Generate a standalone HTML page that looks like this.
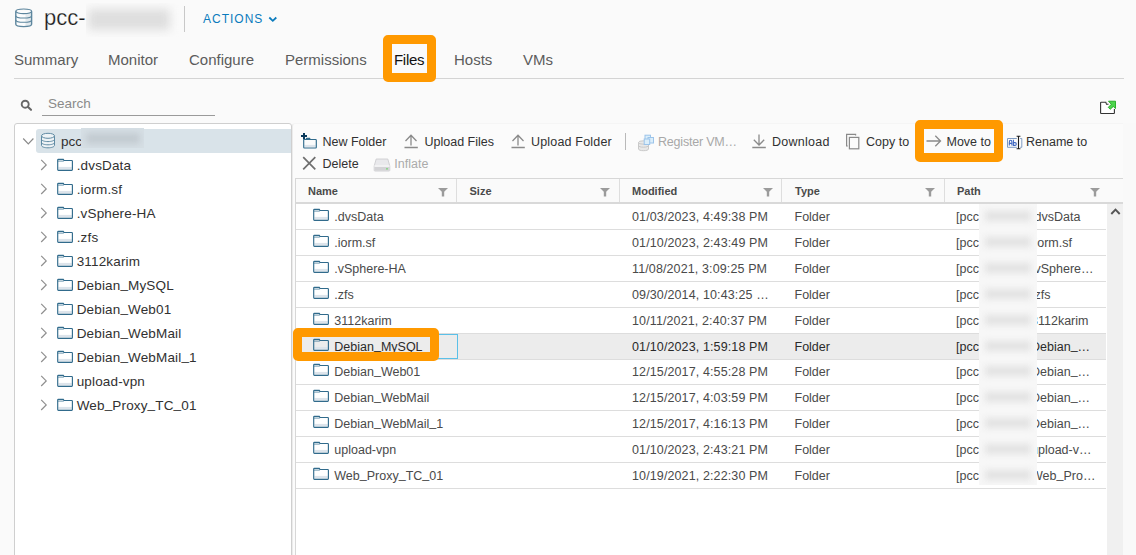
<!DOCTYPE html>
<html><head><meta charset="utf-8">
<style>
*{margin:0;padding:0;box-sizing:border-box}
html,body{width:1136px;height:555px;overflow:hidden;background:#fafafa;font-family:"Liberation Sans",sans-serif;color:#313131}
.a{position:absolute}
.t{position:absolute;white-space:nowrap;line-height:1}
.blur{position:absolute;background:#d9d9d9;filter:blur(4px)}
svg{position:absolute;overflow:visible}
</style></head><body>
<svg style="left:14px;top:8px" width="20" height="21" viewBox="0 0 20 21">
  <path d="M1.8 3.3 V16.3 Q1.8 18.6 9.7 18.6 Q17.6 18.6 17.6 16.3 V3.3 Z" fill="#fbfcfd"/>
  <path d="M11.5 5.6 H17 V17.5 Q15 18.2 11.5 18.3 Z" fill="#e3eaee"/>
  <g fill="none" stroke="#5d869e" stroke-width="1.1">
    <ellipse cx="9.7" cy="3.3" rx="7.9" ry="2.3"/>
    <path d="M1.8 3.3 V16.3 Q1.8 18.6 9.7 18.6 Q17.6 18.6 17.6 16.3 V3.3" stroke-width="1.4"/>
    <path d="M1.8 7.7 Q1.8 10 9.7 10 Q17.6 10 17.6 7.7"/>
    <path d="M1.8 12 Q1.8 14.3 9.7 14.3 Q17.6 14.3 17.6 12"/>
  </g>
</svg>
<div class="t" style="left:44px;top:7.38px;font-size:22px;color:#1a1a1a;-webkit-text-stroke:0.25px #fafafa">pcc-</div>
<div class="a" style="left:86px;top:3px;width:100px;height:34px;overflow:hidden"><div class="blur" style="left:2px;top:6px;width:82px;height:21px;background:#dedede;filter:blur(5px)"></div></div>
<div class="a" style="left:184px;top:6px;width:1px;height:26px;background:#c8c8c8"></div>
<div class="t" style="left:203px;top:12.84px;font-size:12px;letter-spacing:1.0px;color:#0a7bbd">ACTIONS</div>
<svg style="left:268px;top:16px" width="10" height="7" viewBox="0 0 10 7"><path d="M1.3 1.5 L4.8 4.8 L8.3 1.5" fill="none" stroke="#0a7bbd" stroke-width="1.8"/></svg>
<div class="t" style="left:14px;top:52.20px;font-size:15px;color:#5c5c5c">Summary</div>
<div class="t" style="left:108px;top:52.20px;font-size:15px;color:#5c5c5c">Monitor</div>
<div class="t" style="left:189px;top:52.20px;font-size:15px;color:#5c5c5c">Configure</div>
<div class="t" style="left:285px;top:52.20px;font-size:15px;color:#5c5c5c">Permissions</div>
<div class="t" style="left:394px;top:52.20px;font-size:15px;color:#111;letter-spacing:-0.3px">Files</div>
<div class="t" style="left:454px;top:52.20px;font-size:15px;color:#5c5c5c">Hosts</div>
<div class="t" style="left:523px;top:52.20px;font-size:15px;color:#5c5c5c">VMs</div>
<div class="a" style="left:14px;top:78px;width:1110px;height:1px;background:#d4d4d4"></div>
<div class="a" style="left:383px;top:35px;width:53px;height:47px;border:9px solid #ff9900;border-radius:5px"></div>
<svg style="left:20px;top:99px" width="13" height="12" viewBox="0 0 13 12"><circle cx="5.2" cy="5.2" r="3.5" fill="none" stroke="#666" stroke-width="1.9"/><path d="M7.8 7.8 L11 10.8" stroke="#666" stroke-width="2.1" stroke-linecap="round"/></svg>
<div class="t" style="left:48px;top:97.07px;font-size:13.5px;color:#8a8a8a">Search</div>
<div class="a" style="left:42px;top:115px;width:173px;height:1px;background:#9a9a9a"></div>
<svg style="left:1099px;top:100px" width="18" height="15" viewBox="0 0 18 15">
  <path d="M9.5 4.3 H7.5 L6.8 2.2 H2.2 Q1.6 2.2 1.6 2.8 V12.9 Q1.6 13.5 2.2 13.5 H14.8 Q15.4 13.5 15.4 12.9 V9" fill="#fff" stroke="#333" stroke-width="1.1"/>
  <path d="M9.5 1.2 H16.5 V8.5 L14.3 6.5 L11.2 9.3 L9.3 7.3 L12.3 4.3 Z" fill="#4cd64c" stroke="#12a012" stroke-width="0.8"/>
</svg>
<div class="a" style="left:14px;top:123px;width:278px;height:450px;background:#fff;border:1px solid #cfcfcf;border-radius:3px"></div>
<div class="a" style="left:36px;top:129px;width:255px;height:24px;background:#d9e3e9;border-radius:3px 0 0 3px"></div>
<svg style="left:22px;top:137px" width="13" height="9" viewBox="0 0 13 9"><path d="M1.2 1.5 L6.3 6.8 L11.4 1.5" fill="none" stroke="#8a8a8a" stroke-width="1.2"/></svg>
<svg style="left:40px;top:132px" width="16" height="17" viewBox="0 0 16 17">
  <g fill="#eef3f6" stroke="#5f8aa3" stroke-width="1">
    <path d="M1.5 3.8 v9.6 c0 1.4 2.9 2.4 6.5 2.4 s6.5 -1 6.5 -2.4 v-9.6"/>
    <ellipse cx="8" cy="3.8" rx="6.5" ry="2.5"/>
    <path d="M1.5 7.2 c0 1.4 2.9 2.4 6.5 2.4 s6.5 -1 6.5 -2.4" fill="none"/>
    <path d="M1.5 10.4 c0 1.4 2.9 2.4 6.5 2.4 s6.5 -1 6.5 -2.4" fill="none"/>
  </g>
</svg>
<div class="t" style="left:61px;top:135.17px;font-size:13.5px;color:#313131">pcc</div>
<div class="a" style="left:81px;top:128px;width:63px;height:20px;overflow:hidden;background:#d6dfe5"><div class="blur" style="left:5px;top:5px;width:54px;height:11px;background:#c3cbd1;filter:blur(3px)"></div></div>
<svg style="left:40px;top:159px" width="8" height="12" viewBox="0 0 8 12"><path d="M1.2 0.8 L6.2 5.9 L1.2 11" fill="none" stroke="#8f8f8f" stroke-width="1.2"/></svg>
<svg style="left:56px;top:158px" width="18" height="14" viewBox="0 0 18 14">
<rect x="2.4" y="8.9" width="13.4" height="2.8" fill="#dde4eb"/>
<path d="M1.7 2.1 V11.6 Q1.7 12.3 2.4 12.3 H15.7 Q16.4 12.3 16.4 11.6 V3.2 Q16.4 2.5 15.7 2.5 H8 L7.3 1.4 H2.4 Q1.7 1.4 1.7 2.1 Z" fill="none" stroke="#316b8c" stroke-width="1.15"/>
<path d="M1.7 3.1 H7.8" stroke="#316b8c" stroke-width="0.9" opacity="0.8"/>
</svg>
<div class="t" style="left:76.7px;top:159.07px;font-size:13.5px;letter-spacing:0.15px;color:#313131">.dvsData</div>
<svg style="left:40px;top:183px" width="8" height="12" viewBox="0 0 8 12"><path d="M1.2 0.8 L6.2 5.9 L1.2 11" fill="none" stroke="#8f8f8f" stroke-width="1.2"/></svg>
<svg style="left:56px;top:182px" width="18" height="14" viewBox="0 0 18 14">
<rect x="2.4" y="8.9" width="13.4" height="2.8" fill="#dde4eb"/>
<path d="M1.7 2.1 V11.6 Q1.7 12.3 2.4 12.3 H15.7 Q16.4 12.3 16.4 11.6 V3.2 Q16.4 2.5 15.7 2.5 H8 L7.3 1.4 H2.4 Q1.7 1.4 1.7 2.1 Z" fill="none" stroke="#316b8c" stroke-width="1.15"/>
<path d="M1.7 3.1 H7.8" stroke="#316b8c" stroke-width="0.9" opacity="0.8"/>
</svg>
<div class="t" style="left:76.7px;top:183.07px;font-size:13.5px;letter-spacing:0.15px;color:#313131">.iorm.sf</div>
<svg style="left:40px;top:207px" width="8" height="12" viewBox="0 0 8 12"><path d="M1.2 0.8 L6.2 5.9 L1.2 11" fill="none" stroke="#8f8f8f" stroke-width="1.2"/></svg>
<svg style="left:56px;top:206px" width="18" height="14" viewBox="0 0 18 14">
<rect x="2.4" y="8.9" width="13.4" height="2.8" fill="#dde4eb"/>
<path d="M1.7 2.1 V11.6 Q1.7 12.3 2.4 12.3 H15.7 Q16.4 12.3 16.4 11.6 V3.2 Q16.4 2.5 15.7 2.5 H8 L7.3 1.4 H2.4 Q1.7 1.4 1.7 2.1 Z" fill="none" stroke="#316b8c" stroke-width="1.15"/>
<path d="M1.7 3.1 H7.8" stroke="#316b8c" stroke-width="0.9" opacity="0.8"/>
</svg>
<div class="t" style="left:76.7px;top:207.07px;font-size:13.5px;letter-spacing:0.15px;color:#313131">.vSphere-HA</div>
<svg style="left:40px;top:231px" width="8" height="12" viewBox="0 0 8 12"><path d="M1.2 0.8 L6.2 5.9 L1.2 11" fill="none" stroke="#8f8f8f" stroke-width="1.2"/></svg>
<svg style="left:56px;top:230px" width="18" height="14" viewBox="0 0 18 14">
<rect x="2.4" y="8.9" width="13.4" height="2.8" fill="#dde4eb"/>
<path d="M1.7 2.1 V11.6 Q1.7 12.3 2.4 12.3 H15.7 Q16.4 12.3 16.4 11.6 V3.2 Q16.4 2.5 15.7 2.5 H8 L7.3 1.4 H2.4 Q1.7 1.4 1.7 2.1 Z" fill="none" stroke="#316b8c" stroke-width="1.15"/>
<path d="M1.7 3.1 H7.8" stroke="#316b8c" stroke-width="0.9" opacity="0.8"/>
</svg>
<div class="t" style="left:76.7px;top:231.07px;font-size:13.5px;letter-spacing:0.15px;color:#313131">.zfs</div>
<svg style="left:40px;top:255px" width="8" height="12" viewBox="0 0 8 12"><path d="M1.2 0.8 L6.2 5.9 L1.2 11" fill="none" stroke="#8f8f8f" stroke-width="1.2"/></svg>
<svg style="left:56px;top:254px" width="18" height="14" viewBox="0 0 18 14">
<rect x="2.4" y="8.9" width="13.4" height="2.8" fill="#dde4eb"/>
<path d="M1.7 2.1 V11.6 Q1.7 12.3 2.4 12.3 H15.7 Q16.4 12.3 16.4 11.6 V3.2 Q16.4 2.5 15.7 2.5 H8 L7.3 1.4 H2.4 Q1.7 1.4 1.7 2.1 Z" fill="none" stroke="#316b8c" stroke-width="1.15"/>
<path d="M1.7 3.1 H7.8" stroke="#316b8c" stroke-width="0.9" opacity="0.8"/>
</svg>
<div class="t" style="left:76.7px;top:255.07px;font-size:13.5px;letter-spacing:0.15px;color:#313131">3112karim</div>
<svg style="left:40px;top:279px" width="8" height="12" viewBox="0 0 8 12"><path d="M1.2 0.8 L6.2 5.9 L1.2 11" fill="none" stroke="#8f8f8f" stroke-width="1.2"/></svg>
<svg style="left:56px;top:278px" width="18" height="14" viewBox="0 0 18 14">
<rect x="2.4" y="8.9" width="13.4" height="2.8" fill="#dde4eb"/>
<path d="M1.7 2.1 V11.6 Q1.7 12.3 2.4 12.3 H15.7 Q16.4 12.3 16.4 11.6 V3.2 Q16.4 2.5 15.7 2.5 H8 L7.3 1.4 H2.4 Q1.7 1.4 1.7 2.1 Z" fill="none" stroke="#316b8c" stroke-width="1.15"/>
<path d="M1.7 3.1 H7.8" stroke="#316b8c" stroke-width="0.9" opacity="0.8"/>
</svg>
<div class="t" style="left:76.7px;top:279.07px;font-size:13.5px;letter-spacing:0.15px;color:#313131">Debian<span style="position:relative;top:-2px">_</span>MySQL</div>
<svg style="left:40px;top:303px" width="8" height="12" viewBox="0 0 8 12"><path d="M1.2 0.8 L6.2 5.9 L1.2 11" fill="none" stroke="#8f8f8f" stroke-width="1.2"/></svg>
<svg style="left:56px;top:302px" width="18" height="14" viewBox="0 0 18 14">
<rect x="2.4" y="8.9" width="13.4" height="2.8" fill="#dde4eb"/>
<path d="M1.7 2.1 V11.6 Q1.7 12.3 2.4 12.3 H15.7 Q16.4 12.3 16.4 11.6 V3.2 Q16.4 2.5 15.7 2.5 H8 L7.3 1.4 H2.4 Q1.7 1.4 1.7 2.1 Z" fill="none" stroke="#316b8c" stroke-width="1.15"/>
<path d="M1.7 3.1 H7.8" stroke="#316b8c" stroke-width="0.9" opacity="0.8"/>
</svg>
<div class="t" style="left:76.7px;top:303.07px;font-size:13.5px;letter-spacing:0.15px;color:#313131">Debian<span style="position:relative;top:-2px">_</span>Web01</div>
<svg style="left:40px;top:327px" width="8" height="12" viewBox="0 0 8 12"><path d="M1.2 0.8 L6.2 5.9 L1.2 11" fill="none" stroke="#8f8f8f" stroke-width="1.2"/></svg>
<svg style="left:56px;top:326px" width="18" height="14" viewBox="0 0 18 14">
<rect x="2.4" y="8.9" width="13.4" height="2.8" fill="#dde4eb"/>
<path d="M1.7 2.1 V11.6 Q1.7 12.3 2.4 12.3 H15.7 Q16.4 12.3 16.4 11.6 V3.2 Q16.4 2.5 15.7 2.5 H8 L7.3 1.4 H2.4 Q1.7 1.4 1.7 2.1 Z" fill="none" stroke="#316b8c" stroke-width="1.15"/>
<path d="M1.7 3.1 H7.8" stroke="#316b8c" stroke-width="0.9" opacity="0.8"/>
</svg>
<div class="t" style="left:76.7px;top:327.07px;font-size:13.5px;letter-spacing:0.15px;color:#313131">Debian<span style="position:relative;top:-2px">_</span>WebMail</div>
<svg style="left:40px;top:351px" width="8" height="12" viewBox="0 0 8 12"><path d="M1.2 0.8 L6.2 5.9 L1.2 11" fill="none" stroke="#8f8f8f" stroke-width="1.2"/></svg>
<svg style="left:56px;top:350px" width="18" height="14" viewBox="0 0 18 14">
<rect x="2.4" y="8.9" width="13.4" height="2.8" fill="#dde4eb"/>
<path d="M1.7 2.1 V11.6 Q1.7 12.3 2.4 12.3 H15.7 Q16.4 12.3 16.4 11.6 V3.2 Q16.4 2.5 15.7 2.5 H8 L7.3 1.4 H2.4 Q1.7 1.4 1.7 2.1 Z" fill="none" stroke="#316b8c" stroke-width="1.15"/>
<path d="M1.7 3.1 H7.8" stroke="#316b8c" stroke-width="0.9" opacity="0.8"/>
</svg>
<div class="t" style="left:76.7px;top:351.07px;font-size:13.5px;letter-spacing:0.15px;color:#313131">Debian<span style="position:relative;top:-2px">_</span>WebMail<span style="position:relative;top:-2px">_</span>1</div>
<svg style="left:40px;top:375px" width="8" height="12" viewBox="0 0 8 12"><path d="M1.2 0.8 L6.2 5.9 L1.2 11" fill="none" stroke="#8f8f8f" stroke-width="1.2"/></svg>
<svg style="left:56px;top:374px" width="18" height="14" viewBox="0 0 18 14">
<rect x="2.4" y="8.9" width="13.4" height="2.8" fill="#dde4eb"/>
<path d="M1.7 2.1 V11.6 Q1.7 12.3 2.4 12.3 H15.7 Q16.4 12.3 16.4 11.6 V3.2 Q16.4 2.5 15.7 2.5 H8 L7.3 1.4 H2.4 Q1.7 1.4 1.7 2.1 Z" fill="none" stroke="#316b8c" stroke-width="1.15"/>
<path d="M1.7 3.1 H7.8" stroke="#316b8c" stroke-width="0.9" opacity="0.8"/>
</svg>
<div class="t" style="left:76.7px;top:375.07px;font-size:13.5px;letter-spacing:0.15px;color:#313131">upload-vpn</div>
<svg style="left:40px;top:399px" width="8" height="12" viewBox="0 0 8 12"><path d="M1.2 0.8 L6.2 5.9 L1.2 11" fill="none" stroke="#8f8f8f" stroke-width="1.2"/></svg>
<svg style="left:56px;top:398px" width="18" height="14" viewBox="0 0 18 14">
<rect x="2.4" y="8.9" width="13.4" height="2.8" fill="#dde4eb"/>
<path d="M1.7 2.1 V11.6 Q1.7 12.3 2.4 12.3 H15.7 Q16.4 12.3 16.4 11.6 V3.2 Q16.4 2.5 15.7 2.5 H8 L7.3 1.4 H2.4 Q1.7 1.4 1.7 2.1 Z" fill="none" stroke="#316b8c" stroke-width="1.15"/>
<path d="M1.7 3.1 H7.8" stroke="#316b8c" stroke-width="0.9" opacity="0.8"/>
</svg>
<div class="t" style="left:76.7px;top:399.07px;font-size:13.5px;letter-spacing:0.15px;color:#313131">Web<span style="position:relative;top:-2px">_</span>Proxy<span style="position:relative;top:-2px">_</span>TC<span style="position:relative;top:-2px">_</span>01</div>
<div class="a" style="left:292px;top:123px;width:832px;height:450px;background:#fbfbfb;border-left:1px solid #ebebeb;border-top:1px solid #f5f5f5;border-radius:3px 0 0 0"></div>
<svg style="left:300px;top:132px" width="19" height="18" viewBox="0 0 19 18">
<rect x="4.4" y="12.9" width="11.2" height="2.1" fill="#dde4eb"/>
<path d="M3.7 7.5 V15.3 Q3.7 16 4.4 16 H15.6 Q16.3 16 16.3 15.3 V8.2 Q16.3 7.5 15.6 7.5 Z M6.3 7.5 V6.9 Q6.3 6.3 6.9 6.3 H9.6 L10.2 7.5" fill="none" stroke="#316b8c" stroke-width="1.15"/>
<path d="M1 4 H7 M4 1 V7" stroke="#0b3a5c" stroke-width="2"/>
</svg>
<div class="t" style="left:322.5px;top:136.22px;font-size:12.5px;">New Folder</div>
<svg style="left:404px;top:134px" width="15" height="15" viewBox="0 0 15 15"><path d="M1.5 7 L7 1.3 L12.5 7 M7 1.3 V11.5 M0.5 13.5 H13.8" fill="none" stroke="#8a8a8a" stroke-width="1.3"/></svg>
<div class="t" style="left:424.5px;top:136.22px;font-size:12.5px;">Upload Files</div>
<svg style="left:510.5px;top:134px" width="15" height="15" viewBox="0 0 15 15"><path d="M1.5 7 L7 1.3 L12.5 7 M7 1.3 V11.5 M0.5 13.5 H13.8" fill="none" stroke="#8a8a8a" stroke-width="1.3"/></svg>
<div class="t" style="left:531px;top:136.22px;font-size:12.5px;letter-spacing:0.18px">Upload Folder</div>
<div class="a" style="left:625px;top:133px;width:1px;height:17px;background:#b9b9b9"></div>
<svg style="left:637px;top:134px" width="18" height="18" viewBox="0 0 18 18">
<g fill="#e8e8e8" stroke="#c4c4c4" stroke-width="0.9"><path d="M1.5 8.5 v6.5 c0 1 2.2 1.7 5 1.7 s5 -0.7 5 -1.7 v-6.5"/><ellipse cx="6.5" cy="8.5" rx="5" ry="1.7"/><path d="M1.5 11.5 c0 1 2.2 1.7 5 1.7 s5 -0.7 5 -1.7" fill="none"/></g>
<g fill="#dbeefa" stroke="#9cc4ea" stroke-width="1"><rect x="8" y="1.2" width="5.5" height="5.5"/><rect x="11" y="3.5" width="5.5" height="5.5"/><rect x="7.2" y="5" width="5.5" height="5.5"/></g>
</svg>
<div class="t" style="left:658px;top:136.22px;font-size:12.5px;color:#a8a8a8;letter-spacing:-0.2px">Register VM…</div>
<svg style="left:752px;top:134px" width="15" height="15" viewBox="0 0 15 15"><path d="M1.8 5.8 L7 11 L12.2 5.8 M7 0.6 V11 M0.3 13.5 H13.8" fill="none" stroke="#8a8a8a" stroke-width="1.3"/></svg>
<div class="t" style="left:772px;top:136.22px;font-size:12.5px;letter-spacing:0.25px">Download</div>
<svg style="left:845px;top:133px" width="15" height="17" viewBox="0 0 15 17"><path d="M10.6 2.6 V1.4 H1.6 V13 H2.8" fill="none" stroke="#8a8a8a" stroke-width="1.2"/><rect x="4.4" y="4.4" width="9.4" height="11.4" fill="none" stroke="#8a8a8a" stroke-width="1.2"/></svg>
<div class="t" style="left:866px;top:136.22px;font-size:12.5px;">Copy to</div>
<svg style="left:926px;top:135px" width="16" height="12" viewBox="0 0 16 12"><path d="M0.5 6 H14.5 M9.3 0.8 L14.5 6 L9.3 11.2" fill="none" stroke="#8a8a8a" stroke-width="1.3"/></svg>
<div class="t" style="left:946.5px;top:136.22px;font-size:12.5px;">Move to</div>
<svg style="left:1006px;top:135px" width="17" height="15" viewBox="0 0 17 15">
<path d="M10.8 3.5 H1.5 V12.3 H10.8 M14.2 3.5 H15.8 V12.3 H14.2" fill="none" stroke="#7f9cc4" stroke-width="1"/>
<path d="M3.3 10.6 V7.2 Q3.3 5.3 4.6 5.3 Q5.9 5.3 5.9 7.2 V10.6 M3.3 8.4 H5.9 M7.4 4.8 V10.4 H9 Q10.3 10.4 10.3 9 Q10.3 7.6 9 7.6 H7.4" fill="none" stroke="#3f68c2" stroke-width="1.1"/>
<path d="M10.6 1.3 H14.4 M12.5 1.3 V13.7 M10.6 13.7 H14.4" fill="none" stroke="#1e1e1e" stroke-width="1.1"/>
</svg>
<div class="t" style="left:1026px;top:136.22px;font-size:12.5px;">Rename to</div>
<svg style="left:302px;top:156px" width="15" height="15" viewBox="0 0 15 15"><path d="M1.2 1.2 L13.3 13.3 M13.3 1.2 L1.2 13.3" fill="none" stroke="#6f6f6f" stroke-width="1.7"/></svg>
<div class="t" style="left:322.5px;top:158.42px;font-size:12.5px;">Delete</div>
<svg style="left:373px;top:158px" width="18" height="14" viewBox="0 0 18 14">
<path d="M3.2 1 H14.8 L16.8 8 V12.3 Q16.8 13 16 13 H2 Q1.2 13 1.2 12.3 V8 Z" fill="#e9e9ec" stroke="#cdcdd0" stroke-width="0.9"/>
<path d="M1.2 8 H16.8" stroke="#fafafa" stroke-width="1"/>
<rect x="2" y="9" width="14" height="3.5" fill="#d3d3d6"/>
<rect x="13" y="10" width="2" height="1.6" fill="#8fd68f"/>
</svg>
<div class="t" style="left:394.3px;top:158.42px;font-size:12.5px;color:#ababab">Inflate</div>
<div class="a" style="left:915px;top:120px;width:88px;height:42px;border:9px solid #ff9900;border-radius:5px"></div>
<div class="a" style="left:295px;top:178px;width:828px;height:380px;background:#fff;border-left:1px solid #d7d7d7;border-top:1px solid #d7d7d7"></div>
<div class="a" style="left:296px;top:179px;width:827px;height:23px;background:#fafafa"></div>
<div class="a" style="left:296px;top:202px;width:827px;height:2px;background:#d9d9d9"></div>
<div class="a" style="left:456px;top:179px;width:1px;height:23px;background:#dedede"></div>
<div class="a" style="left:619px;top:179px;width:1px;height:23px;background:#dedede"></div>
<div class="a" style="left:781px;top:179px;width:1px;height:23px;background:#dedede"></div>
<div class="a" style="left:944px;top:179px;width:1px;height:23px;background:#dedede"></div>
<svg style="left:438px;top:188px" width="10" height="9" viewBox="0 0 10 9"><path d="M0 0 H10 L6.2 3.8 V8.6 H3.8 V3.8 Z" fill="#9b9b9b"/></svg>
<svg style="left:600.4px;top:188px" width="10" height="9" viewBox="0 0 10 9"><path d="M0 0 H10 L6.2 3.8 V8.6 H3.8 V3.8 Z" fill="#9b9b9b"/></svg>
<svg style="left:763px;top:188px" width="10" height="9" viewBox="0 0 10 9"><path d="M0 0 H10 L6.2 3.8 V8.6 H3.8 V3.8 Z" fill="#9b9b9b"/></svg>
<svg style="left:925px;top:188px" width="10" height="9" viewBox="0 0 10 9"><path d="M0 0 H10 L6.2 3.8 V8.6 H3.8 V3.8 Z" fill="#9b9b9b"/></svg>
<svg style="left:1089.5px;top:188px" width="10" height="9" viewBox="0 0 10 9"><path d="M0 0 H10 L6.2 3.8 V8.6 H3.8 V3.8 Z" fill="#9b9b9b"/></svg>
<div class="t" style="left:308px;top:186.49px;font-size:11px;font-weight:bold;color:#4a4a4a">Name</div>
<div class="t" style="left:469.5px;top:186.49px;font-size:11px;font-weight:bold;color:#4a4a4a">Size</div>
<div class="t" style="left:632px;top:186.49px;font-size:11px;font-weight:bold;color:#4a4a4a">Modified</div>
<div class="t" style="left:795px;top:186.49px;font-size:11px;font-weight:bold;color:#4a4a4a">Type</div>
<div class="t" style="left:957px;top:186.49px;font-size:11px;font-weight:bold;color:#4a4a4a">Path</div>
<div class="a" style="left:1107px;top:204px;width:16px;height:360px;background:#f0f0f0"></div>
<svg style="left:1110px;top:207px" width="11" height="9" viewBox="0 0 11 9"><path d="M1.3 7 L5.5 2.6 L9.7 7" fill="none" stroke="#555" stroke-width="1.9"/></svg>
<div class="a" style="left:1123px;top:123px;width:13px;height:440px;background:#f9f9f9"></div>
<div class="a" style="left:296px;top:229px;width:810px;height:1px;background:#dddddd"></div>
<svg style="left:312px;top:208px" width="18" height="14" viewBox="0 0 18 14">
<rect x="2.4" y="8.9" width="13.4" height="2.8" fill="#dde4eb"/>
<path d="M1.7 2.1 V11.6 Q1.7 12.3 2.4 12.3 H15.7 Q16.4 12.3 16.4 11.6 V3.2 Q16.4 2.5 15.7 2.5 H8 L7.3 1.4 H2.4 Q1.7 1.4 1.7 2.1 Z" fill="none" stroke="#316b8c" stroke-width="1.15"/>
<path d="M1.7 3.1 H7.8" stroke="#316b8c" stroke-width="0.9" opacity="0.8"/>
</svg>
<div class="t" style="left:334.3px;top:211.12px;font-size:12.5px;color:#4a4a4a">.dvsData</div>
<div class="t" style="left:632px;top:211.12px;font-size:12.5px;letter-spacing:0.12px;color:#4a4a4a">01/03/2023, 4:49:38 PM</div>
<div class="t" style="left:794.5px;top:211.12px;font-size:12.5px;color:#4a4a4a">Folder</div>
<div class="t" style="left:956px;top:211.12px;font-size:12.5px;color:#4a4a4a">[pcc</div>
<div class="t" style="left:1031px;top:211.12px;font-size:12.5px;color:#4a4a4a">.dvsData</div>
<div class="a" style="left:296px;top:255px;width:810px;height:1px;background:#dddddd"></div>
<svg style="left:312px;top:234px" width="18" height="14" viewBox="0 0 18 14">
<rect x="2.4" y="8.9" width="13.4" height="2.8" fill="#dde4eb"/>
<path d="M1.7 2.1 V11.6 Q1.7 12.3 2.4 12.3 H15.7 Q16.4 12.3 16.4 11.6 V3.2 Q16.4 2.5 15.7 2.5 H8 L7.3 1.4 H2.4 Q1.7 1.4 1.7 2.1 Z" fill="none" stroke="#316b8c" stroke-width="1.15"/>
<path d="M1.7 3.1 H7.8" stroke="#316b8c" stroke-width="0.9" opacity="0.8"/>
</svg>
<div class="t" style="left:334.3px;top:237.12px;font-size:12.5px;color:#4a4a4a">.iorm.sf</div>
<div class="t" style="left:632px;top:237.12px;font-size:12.5px;letter-spacing:0.12px;color:#4a4a4a">01/10/2023, 2:43:49 PM</div>
<div class="t" style="left:794.5px;top:237.12px;font-size:12.5px;color:#4a4a4a">Folder</div>
<div class="t" style="left:956px;top:237.12px;font-size:12.5px;color:#4a4a4a">[pcc</div>
<div class="t" style="left:1031px;top:237.12px;font-size:12.5px;color:#4a4a4a">.iorm.sf</div>
<div class="a" style="left:296px;top:281px;width:810px;height:1px;background:#dddddd"></div>
<svg style="left:312px;top:260px" width="18" height="14" viewBox="0 0 18 14">
<rect x="2.4" y="8.9" width="13.4" height="2.8" fill="#dde4eb"/>
<path d="M1.7 2.1 V11.6 Q1.7 12.3 2.4 12.3 H15.7 Q16.4 12.3 16.4 11.6 V3.2 Q16.4 2.5 15.7 2.5 H8 L7.3 1.4 H2.4 Q1.7 1.4 1.7 2.1 Z" fill="none" stroke="#316b8c" stroke-width="1.15"/>
<path d="M1.7 3.1 H7.8" stroke="#316b8c" stroke-width="0.9" opacity="0.8"/>
</svg>
<div class="t" style="left:334.3px;top:263.12px;font-size:12.5px;color:#4a4a4a">.vSphere-HA</div>
<div class="t" style="left:632px;top:263.12px;font-size:12.5px;letter-spacing:0.12px;color:#4a4a4a">11/08/2021, 3:09:25 PM</div>
<div class="t" style="left:794.5px;top:263.12px;font-size:12.5px;color:#4a4a4a">Folder</div>
<div class="t" style="left:956px;top:263.12px;font-size:12.5px;color:#4a4a4a">[pcc</div>
<div class="t" style="left:1031px;top:263.12px;font-size:12.5px;color:#4a4a4a">.vSphere…</div>
<div class="a" style="left:296px;top:307px;width:810px;height:1px;background:#dddddd"></div>
<svg style="left:312px;top:286px" width="18" height="14" viewBox="0 0 18 14">
<rect x="2.4" y="8.9" width="13.4" height="2.8" fill="#dde4eb"/>
<path d="M1.7 2.1 V11.6 Q1.7 12.3 2.4 12.3 H15.7 Q16.4 12.3 16.4 11.6 V3.2 Q16.4 2.5 15.7 2.5 H8 L7.3 1.4 H2.4 Q1.7 1.4 1.7 2.1 Z" fill="none" stroke="#316b8c" stroke-width="1.15"/>
<path d="M1.7 3.1 H7.8" stroke="#316b8c" stroke-width="0.9" opacity="0.8"/>
</svg>
<div class="t" style="left:334.3px;top:289.12px;font-size:12.5px;color:#4a4a4a">.zfs</div>
<div class="t" style="left:632px;top:289.12px;font-size:12.5px;letter-spacing:0.12px;color:#4a4a4a">09/30/2014, 10:43:25 …</div>
<div class="t" style="left:794.5px;top:289.12px;font-size:12.5px;color:#4a4a4a">Folder</div>
<div class="t" style="left:956px;top:289.12px;font-size:12.5px;color:#4a4a4a">[pcc</div>
<div class="t" style="left:1031px;top:289.12px;font-size:12.5px;color:#4a4a4a">.zfs</div>
<div class="a" style="left:296px;top:333px;width:810px;height:1px;background:#dddddd"></div>
<svg style="left:312px;top:312px" width="18" height="14" viewBox="0 0 18 14">
<rect x="2.4" y="8.9" width="13.4" height="2.8" fill="#dde4eb"/>
<path d="M1.7 2.1 V11.6 Q1.7 12.3 2.4 12.3 H15.7 Q16.4 12.3 16.4 11.6 V3.2 Q16.4 2.5 15.7 2.5 H8 L7.3 1.4 H2.4 Q1.7 1.4 1.7 2.1 Z" fill="none" stroke="#316b8c" stroke-width="1.15"/>
<path d="M1.7 3.1 H7.8" stroke="#316b8c" stroke-width="0.9" opacity="0.8"/>
</svg>
<div class="t" style="left:334.3px;top:315.12px;font-size:12.5px;color:#4a4a4a">3112karim</div>
<div class="t" style="left:632px;top:315.12px;font-size:12.5px;letter-spacing:0.12px;color:#4a4a4a">10/11/2021, 2:40:37 PM</div>
<div class="t" style="left:794.5px;top:315.12px;font-size:12.5px;color:#4a4a4a">Folder</div>
<div class="t" style="left:956px;top:315.12px;font-size:12.5px;color:#4a4a4a">[pcc</div>
<div class="t" style="left:1031px;top:315.12px;font-size:12.5px;color:#4a4a4a">3112karim</div>
<div class="a" style="left:296px;top:334px;width:810px;height:25px;background:#ececec"></div>
<div class="a" style="left:296px;top:359px;width:810px;height:1px;background:#dddddd"></div>
<svg style="left:312px;top:338px" width="18" height="14" viewBox="0 0 18 14">
<rect x="2.4" y="8.9" width="13.4" height="2.8" fill="#dde4eb"/>
<path d="M1.7 2.1 V11.6 Q1.7 12.3 2.4 12.3 H15.7 Q16.4 12.3 16.4 11.6 V3.2 Q16.4 2.5 15.7 2.5 H8 L7.3 1.4 H2.4 Q1.7 1.4 1.7 2.1 Z" fill="none" stroke="#316b8c" stroke-width="1.15"/>
<path d="M1.7 3.1 H7.8" stroke="#316b8c" stroke-width="0.9" opacity="0.8"/>
</svg>
<div class="t" style="left:334.3px;top:341.12px;font-size:12.5px;color:#2a2a2a">Debian<span style="position:relative;top:-2px">_</span>MySQL</div>
<div class="t" style="left:632px;top:341.12px;font-size:12.5px;letter-spacing:0.12px;color:#2a2a2a">01/10/2023, 1:59:18 PM</div>
<div class="t" style="left:794.5px;top:341.12px;font-size:12.5px;color:#2a2a2a">Folder</div>
<div class="t" style="left:956px;top:341.12px;font-size:12.5px;color:#2a2a2a">[pcc</div>
<div class="t" style="left:1031px;top:341.12px;font-size:12.5px;color:#2a2a2a">Debian<span style="position:relative;top:-2px">_</span>…</div>
<div class="a" style="left:296px;top:384px;width:810px;height:1px;background:#dddddd"></div>
<svg style="left:312px;top:363px" width="18" height="14" viewBox="0 0 18 14">
<rect x="2.4" y="8.9" width="13.4" height="2.8" fill="#dde4eb"/>
<path d="M1.7 2.1 V11.6 Q1.7 12.3 2.4 12.3 H15.7 Q16.4 12.3 16.4 11.6 V3.2 Q16.4 2.5 15.7 2.5 H8 L7.3 1.4 H2.4 Q1.7 1.4 1.7 2.1 Z" fill="none" stroke="#316b8c" stroke-width="1.15"/>
<path d="M1.7 3.1 H7.8" stroke="#316b8c" stroke-width="0.9" opacity="0.8"/>
</svg>
<div class="t" style="left:334.3px;top:366.12px;font-size:12.5px;color:#4a4a4a">Debian<span style="position:relative;top:-2px">_</span>Web01</div>
<div class="t" style="left:632px;top:366.12px;font-size:12.5px;letter-spacing:0.12px;color:#4a4a4a">12/15/2017, 4:55:28 PM</div>
<div class="t" style="left:794.5px;top:366.12px;font-size:12.5px;color:#4a4a4a">Folder</div>
<div class="t" style="left:956px;top:366.12px;font-size:12.5px;color:#4a4a4a">[pcc</div>
<div class="t" style="left:1031px;top:366.12px;font-size:12.5px;color:#4a4a4a">Debian<span style="position:relative;top:-2px">_</span>…</div>
<div class="a" style="left:296px;top:410px;width:810px;height:1px;background:#dddddd"></div>
<svg style="left:312px;top:389px" width="18" height="14" viewBox="0 0 18 14">
<rect x="2.4" y="8.9" width="13.4" height="2.8" fill="#dde4eb"/>
<path d="M1.7 2.1 V11.6 Q1.7 12.3 2.4 12.3 H15.7 Q16.4 12.3 16.4 11.6 V3.2 Q16.4 2.5 15.7 2.5 H8 L7.3 1.4 H2.4 Q1.7 1.4 1.7 2.1 Z" fill="none" stroke="#316b8c" stroke-width="1.15"/>
<path d="M1.7 3.1 H7.8" stroke="#316b8c" stroke-width="0.9" opacity="0.8"/>
</svg>
<div class="t" style="left:334.3px;top:392.12px;font-size:12.5px;color:#4a4a4a">Debian<span style="position:relative;top:-2px">_</span>WebMail</div>
<div class="t" style="left:632px;top:392.12px;font-size:12.5px;letter-spacing:0.12px;color:#4a4a4a">12/15/2017, 4:03:59 PM</div>
<div class="t" style="left:794.5px;top:392.12px;font-size:12.5px;color:#4a4a4a">Folder</div>
<div class="t" style="left:956px;top:392.12px;font-size:12.5px;color:#4a4a4a">[pcc</div>
<div class="t" style="left:1031px;top:392.12px;font-size:12.5px;color:#4a4a4a">Debian<span style="position:relative;top:-2px">_</span>…</div>
<div class="a" style="left:296px;top:436px;width:810px;height:1px;background:#dddddd"></div>
<svg style="left:312px;top:415px" width="18" height="14" viewBox="0 0 18 14">
<rect x="2.4" y="8.9" width="13.4" height="2.8" fill="#dde4eb"/>
<path d="M1.7 2.1 V11.6 Q1.7 12.3 2.4 12.3 H15.7 Q16.4 12.3 16.4 11.6 V3.2 Q16.4 2.5 15.7 2.5 H8 L7.3 1.4 H2.4 Q1.7 1.4 1.7 2.1 Z" fill="none" stroke="#316b8c" stroke-width="1.15"/>
<path d="M1.7 3.1 H7.8" stroke="#316b8c" stroke-width="0.9" opacity="0.8"/>
</svg>
<div class="t" style="left:334.3px;top:418.12px;font-size:12.5px;color:#4a4a4a">Debian<span style="position:relative;top:-2px">_</span>WebMail<span style="position:relative;top:-2px">_</span>1</div>
<div class="t" style="left:632px;top:418.12px;font-size:12.5px;letter-spacing:0.12px;color:#4a4a4a">12/15/2017, 4:16:13 PM</div>
<div class="t" style="left:794.5px;top:418.12px;font-size:12.5px;color:#4a4a4a">Folder</div>
<div class="t" style="left:956px;top:418.12px;font-size:12.5px;color:#4a4a4a">[pcc</div>
<div class="t" style="left:1031px;top:418.12px;font-size:12.5px;color:#4a4a4a">Debian<span style="position:relative;top:-2px">_</span>…</div>
<div class="a" style="left:296px;top:462px;width:810px;height:1px;background:#dddddd"></div>
<svg style="left:312px;top:441px" width="18" height="14" viewBox="0 0 18 14">
<rect x="2.4" y="8.9" width="13.4" height="2.8" fill="#dde4eb"/>
<path d="M1.7 2.1 V11.6 Q1.7 12.3 2.4 12.3 H15.7 Q16.4 12.3 16.4 11.6 V3.2 Q16.4 2.5 15.7 2.5 H8 L7.3 1.4 H2.4 Q1.7 1.4 1.7 2.1 Z" fill="none" stroke="#316b8c" stroke-width="1.15"/>
<path d="M1.7 3.1 H7.8" stroke="#316b8c" stroke-width="0.9" opacity="0.8"/>
</svg>
<div class="t" style="left:334.3px;top:444.12px;font-size:12.5px;color:#4a4a4a">upload-vpn</div>
<div class="t" style="left:632px;top:444.12px;font-size:12.5px;letter-spacing:0.12px;color:#4a4a4a">01/10/2023, 2:43:21 PM</div>
<div class="t" style="left:794.5px;top:444.12px;font-size:12.5px;color:#4a4a4a">Folder</div>
<div class="t" style="left:956px;top:444.12px;font-size:12.5px;color:#4a4a4a">[pcc</div>
<div class="t" style="left:1031px;top:444.12px;font-size:12.5px;color:#4a4a4a">upload-v…</div>
<div class="a" style="left:296px;top:488px;width:810px;height:1px;background:#dddddd"></div>
<svg style="left:312px;top:467px" width="18" height="14" viewBox="0 0 18 14">
<rect x="2.4" y="8.9" width="13.4" height="2.8" fill="#dde4eb"/>
<path d="M1.7 2.1 V11.6 Q1.7 12.3 2.4 12.3 H15.7 Q16.4 12.3 16.4 11.6 V3.2 Q16.4 2.5 15.7 2.5 H8 L7.3 1.4 H2.4 Q1.7 1.4 1.7 2.1 Z" fill="none" stroke="#316b8c" stroke-width="1.15"/>
<path d="M1.7 3.1 H7.8" stroke="#316b8c" stroke-width="0.9" opacity="0.8"/>
</svg>
<div class="t" style="left:334.3px;top:470.12px;font-size:12.5px;color:#4a4a4a">Web<span style="position:relative;top:-2px">_</span>Proxy<span style="position:relative;top:-2px">_</span>TC<span style="position:relative;top:-2px">_</span>01</div>
<div class="t" style="left:632px;top:470.12px;font-size:12.5px;letter-spacing:0.12px;color:#4a4a4a">10/19/2021, 2:22:30 PM</div>
<div class="t" style="left:794.5px;top:470.12px;font-size:12.5px;color:#4a4a4a">Folder</div>
<div class="t" style="left:956px;top:470.12px;font-size:12.5px;color:#4a4a4a">[pcc</div>
<div class="t" style="left:1031px;top:470.12px;font-size:12.5px;color:#4a4a4a">Web<span style="position:relative;top:-2px">_</span>Pro…</div>
<div class="a" style="left:296px;top:334px;width:162px;height:25px;border:1px solid #5bc0e8"></div>
<div class="a" style="left:979px;top:204px;width:58px;height:281px;overflow:hidden;background:#f7f7f7"><div class="blur" style="left:6px;top:7px;width:46px;height:10px;background:#e3e3e3;filter:blur(3px)"></div><div class="blur" style="left:6px;top:33px;width:46px;height:10px;background:#e3e3e3;filter:blur(3px)"></div><div class="blur" style="left:6px;top:59px;width:46px;height:10px;background:#e3e3e3;filter:blur(3px)"></div><div class="blur" style="left:6px;top:85px;width:46px;height:10px;background:#e3e3e3;filter:blur(3px)"></div><div class="blur" style="left:6px;top:111px;width:46px;height:10px;background:#e3e3e3;filter:blur(3px)"></div><div class="blur" style="left:6px;top:137px;width:46px;height:10px;background:#e3e3e3;filter:blur(3px)"></div><div class="blur" style="left:6px;top:162px;width:46px;height:10px;background:#e3e3e3;filter:blur(3px)"></div><div class="blur" style="left:6px;top:188px;width:46px;height:10px;background:#e3e3e3;filter:blur(3px)"></div><div class="blur" style="left:6px;top:214px;width:46px;height:10px;background:#e3e3e3;filter:blur(3px)"></div><div class="blur" style="left:6px;top:240px;width:46px;height:10px;background:#e3e3e3;filter:blur(3px)"></div><div class="blur" style="left:6px;top:266px;width:46px;height:10px;background:#e3e3e3;filter:blur(3px)"></div></div>
<div class="a" style="left:293px;top:328px;width:146px;height:33px;border:9px solid #ff9900;border-radius:5px"></div>
</body></html>
